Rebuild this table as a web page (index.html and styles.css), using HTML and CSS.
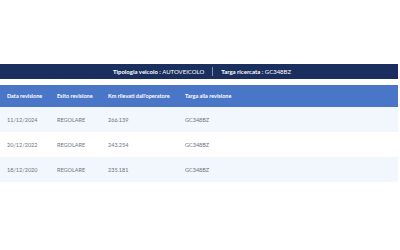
FILE: index.html
```html
<!DOCTYPE html>
<html lang="it">
<head>
<meta charset="utf-8">
<link rel="stylesheet" href="styles.css">
</head>
<body>
<div class="page">
  <div class="summary">
    <span class="item"><b>Tipologia veicolo :</b> AUTOVEICOLO</span>
    <span class="sep"></span>
    <span class="item"><b>Targa ricercata :</b> GC348BZ</span>
  </div>
  <table class="grid">
    <thead>
      <tr>
        <th class="c1">Data revisione</th>
        <th class="c2">Esito revisione</th>
        <th class="c3">Km rilevati dall'operatore</th>
        <th class="c4">Targa alla revisione</th>
      </tr>
    </thead>
    <tbody>
      <tr><td>11/12/2024</td><td>REGOLARE</td><td>266.139</td><td>GC348BZ</td></tr>
      <tr><td>20/12/2022</td><td>REGOLARE</td><td>243.254</td><td>GC348BZ</td></tr>
      <tr><td>18/12/2020</td><td>REGOLARE</td><td>235.181</td><td>GC348BZ</td></tr>
    </tbody>
  </table>
</div>
</body>
</html>
```
FILE: styles.css
```css
html, body {
  margin: 0;
  padding: 0;
  background: #ffffff;
}
body {
  font-family: Lato, "Open Sans", sans-serif;
  width: 400px;
  height: 250px;
  overflow: hidden;
}
.page {
  padding-top: 64px;
  width: 398px;
}
.summary {
  height: 15px;
  background: #1b2f5e;
  color: #ffffff;
  font-size: 6px;
  display: flex;
  align-items: center;
  justify-content: center;
  gap: 8px;
  padding-left: 6px;
}
.summary b {
  font-weight: 700;
}
.sep {
  width: 1px;
  height: 9px;
  background: #8090b0;
}
.grid {
  margin-top: 6px;
  width: 100%;
  border-collapse: collapse;
  font-size: 5.5px;
}
.grid th {
  background: #4a76c8;
  color: #ffffff;
  font-weight: 700;
  text-align: left;
  height: 22px;
  padding: 0 0 0 7px;
}
.grid td {
  color: #6e7380;
  height: 25px;
  padding: 0 0 0 7px;
}
.grid tbody tr:nth-child(odd) td {
  background: #f2f6fd;
}
.grid .c1 { width: 43px; }
.grid .c2 { width: 44px; }
.grid .c3 { width: 70px; }
```
